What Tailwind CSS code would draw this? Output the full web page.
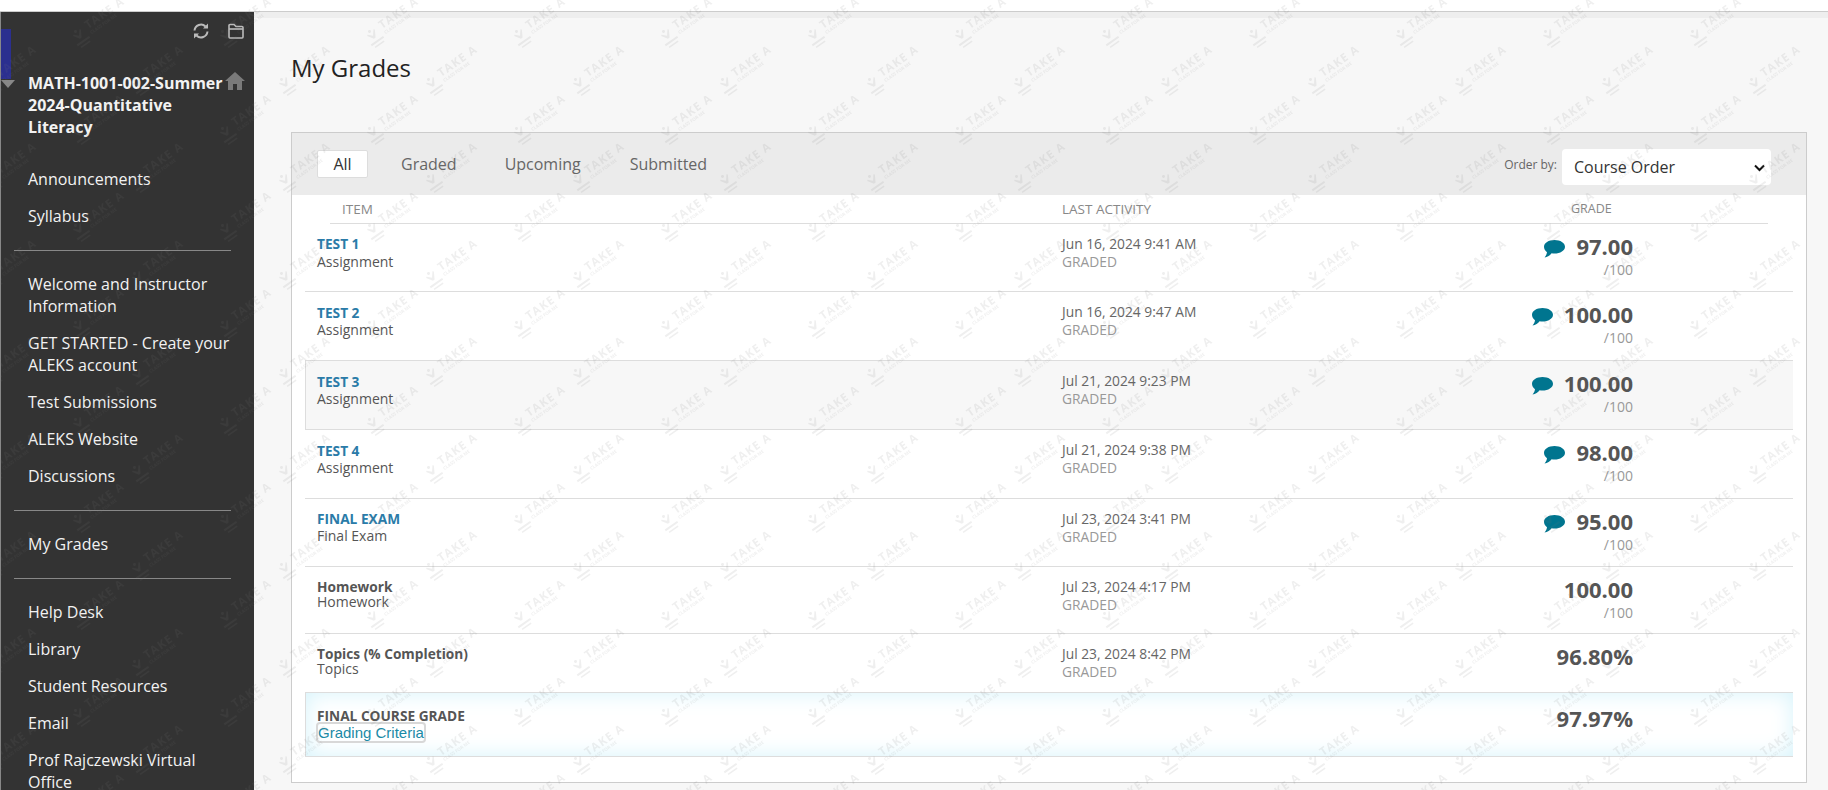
<!DOCTYPE html>
<html lang="en">
<head>
  <meta charset="UTF-8" />
  <title>My Grades</title>
  <script src="https://cdn.jsdelivr.net/npm/@tailwindcss/browser@4"></script>
</head>
<body class="relative h-[790px] overflow-hidden bg-white font-['Open_Sans',sans-serif] text-[#555]">
  <div class="h-[12px] border-b border-[#ccc]"></div>
  <div class="flex h-[778px]">

    <!-- course menu -->
    <aside class="relative w-[254px] shrink-0 overflow-hidden border-l border-[#888] bg-[#333] text-[16px] leading-[22px] text-[#f2f2f2]">
      <div class="absolute left-0 top-[17px] h-[50px] w-[10px] bg-[#2b2f8f]"></div>
      <div class="absolute left-0 top-[68px] h-0 w-0 border-x-[7px] border-t-[8px] border-x-transparent border-t-[#888]"></div>
      <svg class="absolute left-[191px] top-[10px]" width="18" height="18" viewBox="0 0 18 18" fill="none" stroke="#bbb" stroke-width="2"><path d="M2.500 8.500A6.500 6.500 0 0 1 13.500 4.500" /><path d="M15.500 9.500A6.500 6.500 0 0 1 4.500 13.500" /><path d="M16 1.500v5h-5z" fill="#bbb" stroke="none" /><path d="M2 16.500v-5h5z" fill="#bbb" stroke="none" /></svg>
      <svg class="absolute left-[226px] top-[10px]" width="18" height="18" viewBox="0 0 18 18" fill="none" stroke="#bbb" stroke-width="1.6"><path d="M2 15V3.500A1 1 0 0 1 3 2.500h4l2 2h6a1 1 0 0 1 1 1V15a1 1 0 0 1-1 1H3a1 1 0 0 1-1-1z" /><path d="M2 7h14" /></svg>
      <svg class="absolute left-[224px] top-[60px]" width="20" height="18" viewBox="0 0 20 18" fill="#7a7a7a"><path d="M10 0 20 9h-3v9h-5v-6H8v6H3V9H0z" /></svg>

      <h2 class="whitespace-nowrap pl-[27px] pt-[60px] font-bold">MATH-1001-002-Summer<br />2024-Quantitative<br />Literacy</h2>

      <ul class="flex flex-col gap-[15px] pl-[27px] pr-[24px] pt-[30px]">
        <li>Announcements</li>
        <li>Syllabus</li>
      </ul>
      <div class="ml-[13px] mr-[23px] mt-[23px] border-t border-[#888]"></div>
      <ul class="flex flex-col gap-[15px] pl-[27px] pr-[24px] pt-[22px]">
        <li>Welcome and Instructor Information</li>
        <li>GET STARTED - Create your ALEKS account</li>
        <li>Test Submissions</li>
        <li>ALEKS Website</li>
        <li>Discussions</li>
      </ul>
      <div class="ml-[13px] mr-[23px] mt-[23px] border-t border-[#888]"></div>
      <ul class="flex flex-col gap-[15px] pl-[27px] pr-[24px] pt-[22px]">
        <li>My Grades</li>
      </ul>
      <div class="ml-[13px] mr-[23px] mt-[23px] border-t border-[#888]"></div>
      <ul class="flex flex-col gap-[15px] pl-[27px] pr-[24px] pt-[22px]">
        <li>Help Desk</li>
        <li>Library</li>
        <li>Student Resources</li>
        <li>Email</li>
        <li>Prof Rajczewski Virtual Office</li>
      </ul>
    </aside>

    <!-- content -->
    <main class="min-w-0 flex-1 border-t-[6px] border-[#eee] bg-[#f7f7f7] pl-[37px] pr-[21px]">
      <h1 class="pt-[34px] text-[24px] leading-[32px] text-[#222]">My Grades</h1>

      <section class="mt-[48px] h-[651px] border border-[#ccc] bg-white">
        <div class="flex h-[62px] items-center bg-[#ebebeb] pl-[25px] pr-[35px]">
          <span class="-mt-px flex h-[28px] w-[51px] items-center justify-center rounded-[2px] border border-[#ddd] bg-white text-[16px] font-medium text-[#333]">All</span>
          <span class="ml-[33px] text-[16px] text-[#666]">Graded</span>
          <span class="ml-[48px] text-[16px] text-[#666]">Upcoming</span>
          <span class="ml-[49px] text-[16px] text-[#666]">Submitted</span>
          <span class="ml-auto mr-[5px] mt-[1px] text-[12px] text-[#666]">Order by:</span>
          <div class="relative mt-[6px]">
            <select class="block h-[36px] w-[209px] appearance-none rounded-[4px] bg-white pl-[12px] text-[16px] text-[#333]">
              <option>Course Order</option>
            </select>
            <svg class="absolute right-[6px] top-[15px]" width="11" height="8" viewBox="0 0 11 8" fill="none" stroke="#111" stroke-width="2"><path d="M1 1.500l4.500 4.500L10 1.500" /></svg>
          </div>
        </div>

        <div class="mx-[38px] flex h-[29px] items-center border-b border-[#ddd] text-[13.500px] text-[#888]">
          <span class="w-[732px] pl-[12px]">ITEM</span>
          <span class="w-[509px]">LAST ACTIVITY</span>
          <span class="text-[12.500px]">GRADE</span>
        </div>

        <div class="mx-[13px] flex h-[68px] border-b border-[#ddd]">
          <div class="w-[757px] pl-[12px] pt-[11px] text-[14px] leading-[18px]"><a class="block text-[13.700px] font-bold text-[#2a7ba8]">TEST 1</a>Assignment</div>
          <div class="w-[571px] pt-[11px] text-[13.800px] leading-[18px] text-[#666]">Jun 16, 2024 9:41 AM<div class="text-[#999]">GRADED</div></div>
          <div class="-ml-[300px] w-[300px] pt-[8px] text-right">
            <div class="flex items-center justify-end gap-[11px] text-[22px] font-bold leading-[28px]"><svg class="mt-[6px]" width="21" height="18" viewBox="0 0 21 18" fill="#00758f"><path d="M10.500 0C16.300 0 21 2.900 21 6.800s-4.700 6.800-10.500 6.800c-1 0-2-.1-2.900-.3C6.100 15.400 3.500 17 .5 17.500c1.100-1.200 2.200-3 2.500-5.300C1.100 11 0 9 0 6.800 0 2.900 4.700 0 10.500 0z" /></svg>97.00</div>
            <div class="mt-[1px] text-[14px] leading-[18px] text-[#999]">/100</div>
          </div>
        </div>

        <div class="mx-[13px] flex h-[69px] border-b border-[#ddd]">
          <div class="w-[757px] pl-[12px] pt-[12px] text-[14px] leading-[17px]"><a class="block text-[13.700px] font-bold text-[#2a7ba8]">TEST 2</a>Assignment</div>
          <div class="w-[571px] pt-[11px] text-[13.800px] leading-[18px] text-[#666]">Jun 16, 2024 9:47 AM<div class="text-[#999]">GRADED</div></div>
          <div class="-ml-[300px] w-[300px] pt-[8px] text-right">
            <div class="flex items-center justify-end gap-[11px] text-[22px] font-bold leading-[28px]"><svg class="mt-[6px]" width="21" height="18" viewBox="0 0 21 18" fill="#00758f"><path d="M10.500 0C16.300 0 21 2.900 21 6.800s-4.700 6.800-10.500 6.800c-1 0-2-.1-2.900-.3C6.100 15.400 3.500 17 .5 17.500c1.100-1.200 2.200-3 2.500-5.300C1.100 11 0 9 0 6.800 0 2.900 4.700 0 10.500 0z" /></svg>100.00</div>
            <div class="mt-[1px] text-[14px] leading-[18px] text-[#999]">/100</div>
          </div>
        </div>

        <div class="mx-[13px] flex h-[69px] border-b border-l border-[#ddd] bg-[#f7f7f7]">
          <div class="w-[756px] pl-[11px] pt-[12px] text-[14px] leading-[17px]"><a class="block text-[13.700px] font-bold text-[#2a7ba8]">TEST 3</a>Assignment</div>
          <div class="w-[571px] pt-[11px] text-[13.800px] leading-[18px] text-[#666]">Jul 21, 2024 9:23 PM<div class="text-[#999]">GRADED</div></div>
          <div class="-ml-[300px] w-[300px] pt-[8px] text-right">
            <div class="flex items-center justify-end gap-[11px] text-[22px] font-bold leading-[28px]"><svg class="mt-[6px]" width="21" height="18" viewBox="0 0 21 18" fill="#00758f"><path d="M10.500 0C16.300 0 21 2.900 21 6.800s-4.700 6.800-10.500 6.800c-1 0-2-.1-2.900-.3C6.100 15.400 3.500 17 .5 17.500c1.100-1.200 2.200-3 2.500-5.300C1.100 11 0 9 0 6.800 0 2.900 4.700 0 10.500 0z" /></svg>100.00</div>
            <div class="mt-[1px] text-[14px] leading-[18px] text-[#999]">/100</div>
          </div>
        </div>

        <div class="mx-[13px] flex h-[69px] border-b border-[#ddd]">
          <div class="w-[757px] pl-[12px] pt-[12px] text-[14px] leading-[17px]"><a class="block text-[13.700px] font-bold text-[#2a7ba8]">TEST 4</a>Assignment</div>
          <div class="w-[571px] pt-[11px] text-[13.800px] leading-[18px] text-[#666]">Jul 21, 2024 9:38 PM<div class="text-[#999]">GRADED</div></div>
          <div class="-ml-[300px] w-[300px] pt-[8px] text-right">
            <div class="flex items-center justify-end gap-[11px] text-[22px] font-bold leading-[28px]"><svg class="mt-[6px]" width="21" height="18" viewBox="0 0 21 18" fill="#00758f"><path d="M10.500 0C16.300 0 21 2.900 21 6.800s-4.700 6.800-10.500 6.800c-1 0-2-.1-2.900-.3C6.100 15.400 3.500 17 .5 17.500c1.100-1.200 2.200-3 2.500-5.300C1.100 11 0 9 0 6.800 0 2.900 4.700 0 10.500 0z" /></svg>98.00</div>
            <div class="mt-[1px] text-[14px] leading-[18px] text-[#999]">/100</div>
          </div>
        </div>

        <div class="mx-[13px] flex h-[68px] border-b border-[#ddd]">
          <div class="w-[757px] pl-[12px] pt-[11px] text-[14px] leading-[17px]"><a class="block text-[13.700px] font-bold text-[#2a7ba8]">FINAL EXAM</a>Final Exam</div>
          <div class="w-[571px] pt-[11px] text-[13.800px] leading-[18px] text-[#666]">Jul 23, 2024 3:41 PM<div class="text-[#999]">GRADED</div></div>
          <div class="-ml-[300px] w-[300px] pt-[8px] text-right">
            <div class="flex items-center justify-end gap-[11px] text-[22px] font-bold leading-[28px]"><svg class="mt-[6px]" width="21" height="18" viewBox="0 0 21 18" fill="#00758f"><path d="M10.500 0C16.300 0 21 2.900 21 6.800s-4.700 6.800-10.500 6.800c-1 0-2-.1-2.900-.3C6.100 15.400 3.500 17 .5 17.500c1.100-1.200 2.200-3 2.500-5.300C1.100 11 0 9 0 6.800 0 2.900 4.700 0 10.500 0z" /></svg>95.00</div>
            <div class="mt-[1px] text-[14px] leading-[18px] text-[#999]">/100</div>
          </div>
        </div>

        <div class="mx-[13px] flex h-[67px] border-b border-[#ddd]">
          <div class="w-[757px] pl-[12px] pt-[12px] text-[14px] leading-[15px]"><span class="block text-[13.700px] font-bold">Homework</span>Homework</div>
          <div class="w-[571px] pt-[11px] text-[13.800px] leading-[18px] text-[#666]">Jul 23, 2024 4:17 PM<div class="text-[#999]">GRADED</div></div>
          <div class="-ml-[300px] w-[300px] pt-[8px] text-right">
            <div class="text-[22px] font-bold leading-[28px]">100.00</div>
            <div class="mt-[1px] text-[14px] leading-[18px] text-[#999]">/100</div>
          </div>
        </div>

        <div class="mx-[13px] flex h-[58px]">
          <div class="w-[757px] pl-[12px] pt-[12px] text-[14px] leading-[15px]"><span class="block text-[13.700px] font-bold">Topics (% Completion)</span>Topics</div>
          <div class="w-[571px] pt-[11px] text-[13.800px] leading-[18px] text-[#666]">Jul 23, 2024 8:42 PM<div class="text-[#999]">GRADED</div></div>
          <div class="-ml-[300px] w-[300px] pt-[8px] text-right text-[22px] font-bold leading-[28px]">96.80%</div>
        </div>

        <div class="mx-[13px] flex h-[65px] border-y border-l border-[#ddd] bg-white shadow-[inset_0_0_22px_#d5f3fb]">
          <div class="w-[1027px] pl-[11px] pt-[14px] text-[14px] leading-[17px]"><span class="block text-[13.700px] font-bold">FINAL COURSE GRADE</span><a class="ml-px inline-block rounded-[2px] font-['Liberation_Sans',sans-serif] text-[15px] leading-[17px] text-[#1a8aa6] shadow-[0_0_0_2px_#d8d8d8]">Grading Criteria</a></div>
          <div class="w-[300px] pt-[11px] text-right text-[22px] font-bold leading-[28px]">97.97%</div>
        </div>
      </section>
    </main>
  </div>

  <!-- watermark tiles over the whole page -->
  <svg class="pointer-events-none absolute left-0 top-0" width="1828" height="790">
    <defs>
      <g id="mark" fill="#777">
        <g transform="rotate(-35)">
          <text x="-9" y="-1" font-family="Open Sans" font-weight="700" font-size="11.500" letter-spacing="1">TAKE A</text>
          <text x="-9" y="5" font-family="Open Sans" font-weight="700" font-size="4.500">CLASS FOR ME</text>
          <path d="M-27 5h15v2h-15zM-25 9h11v1.500h-11zM-24 -5l4 4 4-5 1 1-4 7h-2l-4-6zM-20.500-8a1.500 1.500 0 1 0 .01 0z" />
        </g>
      </g>
      <pattern id="wm" x="-22" y="-1" width="147" height="97" patternUnits="userSpaceOnUse">
        <use href="#mark" x="118" y="26" />
        <use href="#mark" x="30" y="74" />
      </pattern>
    </defs>
    <rect width="1828" height="790" fill="url(#wm)" opacity="0.12" />
  </svg>
</body>
</html>
